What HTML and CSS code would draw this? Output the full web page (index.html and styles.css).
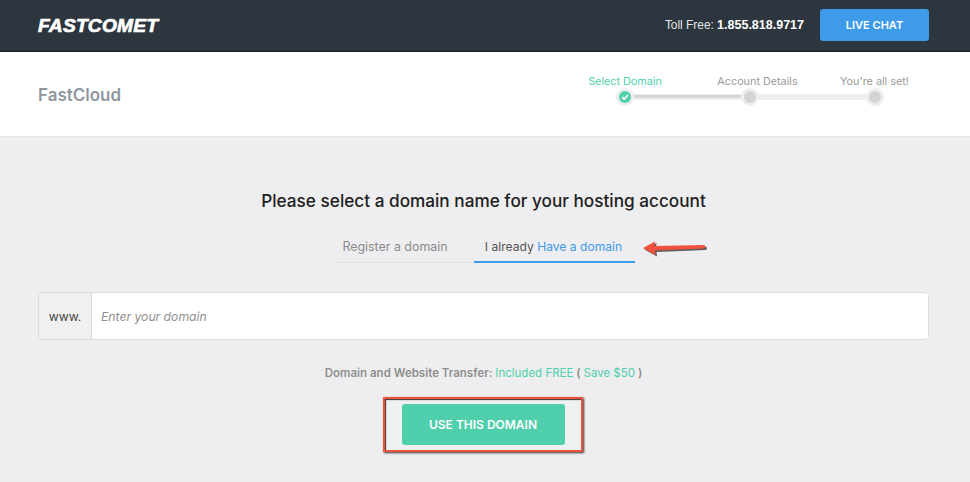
FILE: index.html
```html
<!DOCTYPE html>
<html lang="en">
<head>
  <meta charset="UTF-8" />
  <meta name="viewport" content="width=device-width, initial-scale=1.0" />
  <title>FastCloud | FastComet</title>
  <link rel="stylesheet" href="styles.css">
</head>
<body>
  <header class="ust-bar">
    <a class="logo" href="#">FASTCOMET</a>
    <div class="ust-sag">
      <p class="telefon">Toll Free: <strong>1.855.818.9717</strong></p>
      <a class="canli-destek" href="#">LIVE CHAT</a>
    </div>
  </header>

  <section class="urun-bar">
    <h2 class="urun-adi">FastCloud</h2>
    <div class="adimlar">
      <div class="adim-yazilari">
        <span class="adim-yazi aktif">Select Domain</span>
        <span class="adim-yazi">Account Details</span>
        <span class="adim-yazi">You're all set!</span>
      </div>
      <div class="adim-cizgi">
        <span class="nokta tamam">
          <svg viewBox="0 0 10 10" width="8" height="8" aria-hidden="true">
            <path d="M1.5 5.2 4 7.6 8.6 2.6" fill="none" stroke="#fff" stroke-width="2" />
          </svg>
        </span>
        <span class="nokta"></span>
        <span class="nokta"></span>
      </div>
    </div>
  </section>

  <main class="icerik">
    <h1>Please select a domain name for your hosting account</h1>

    <div class="sekmeler">
      <a class="sekme" href="#">Register a domain</a>
      <a class="sekme secili" href="#">I already <span class="mavi">Have a domain</span></a>
      <!-- kirmizi ok -->
      <svg class="ok" viewBox="0 0 70 20" width="70" height="20" aria-hidden="true">
        <path d="M3 9 L15 2.500 L14.500 7 L64 6 Q67 7.500 64 9.500 L15 11.500 L15.500 16 Z" fill="#2b2b2b" transform="translate(1.500 1.500)" opacity="0.75" />
        <path d="M3 9 L15 2.500 L14.500 7 L64 6 Q67 7.500 64 9.500 L15 11.500 L15.500 16 Z" fill="#f0523f" />
      </svg>
    </div>

    <div class="alan">
      <span class="alan-on">www.</span>
      <input class="alan-girdi" type="text" placeholder="Enter your domain" />
    </div>

    <p class="transfer">Domain and Website Transfer: <span class="yesil">Included FREE</span> ( <span class="yesil">Save $50</span> )</p>

    <div class="cerceve">
      <button class="buton">USE THIS DOMAIN</button>
    </div>
  </main>
</body>
</html>
```

FILE: styles.css
```css
* {
  margin: 0;
  padding: 0;
  box-sizing: border-box;
}

html,
body {
  height: 100%;
}

body {
  font-family: "Inter", "Liberation Sans", sans-serif;
  background: #eeeef0;
  color: #222;
  overflow: hidden;
}

a {
  text-decoration: none;
}

/* Ust koyu bar */
.ust-bar {
  height: 52px;
  background: #2d353e;
  border-bottom: 1px solid #1d232b;
  box-shadow: inset 0 -1px 0 #272e36;
  display: flex;
  align-items: center;
  justify-content: space-between;
  padding: 0 41px 0 38px;
}

.logo {
  color: #fff;
  font-family: "Liberation Sans", sans-serif;
  font-size: 19.2px;
  font-weight: 700;
  font-style: italic;
  letter-spacing: 0.2px;
  -webkit-text-stroke: 0.7px #fff;
}

.ust-sag {
  display: flex;
  align-items: center;
  gap: 16px;
  padding-bottom: 1px;
}

.telefon {
  font-family: "Liberation Sans", sans-serif;
  font-size: 11.9px;
  color: #e4e6e8;
}

.telefon strong {
  color: #fff;
  font-size: 12.5px;
}

.canli-destek {
  width: 109px;
  height: 32px;
  background: #3d9be9;
  border-radius: 3px;
  color: #fff;
  font-size: 11px;
  font-weight: 600;
  display: flex;
  align-items: center;
  justify-content: center;
}

/* Urun adi ve adimlar */
.urun-bar {
  height: 85px;
  background: #fff;
  border-bottom: 1px solid #e6e6e6;
  display: flex;
  justify-content: space-between;
  padding: 0 46px 0 38px;
}

.urun-adi {
  font-size: 17px;
  font-weight: 600;
  color: #8f979f;
  padding-top: 33px;
}

.adimlar {
  width: 364px;
  padding-top: 22px;
}

.adim-yazilari {
  display: grid;
  grid-template-columns: 130px 135px 99px;
  text-align: center;
  font-size: 10.8px;
  color: #9a9a9a;
  line-height: 16px;
}

.adim-yazi.aktif {
  color: #4fcfab;
}

.adim-cizgi {
  position: relative;
  width: 268px;
  margin: -2px 0 0 56px;
  display: flex;
  justify-content: space-between;
}

/* Cizgi noktalarin altinda */
.adim-cizgi::before {
  content: "";
  position: absolute;
  left: 8px;
  right: 8px;
  top: 6px;
  height: 6px;
  background: #eeeeee;
}

.adim-cizgi::after {
  content: "";
  position: absolute;
  left: 14px;
  width: 120px;
  top: 7px;
  height: 3px;
  background: #d6d6d8;
}

.nokta {
  position: relative;
  z-index: 1;
  width: 18px;
  height: 18px;
  border-radius: 50%;
  background: #d4d4d6;
  border: 3px solid #eeeeee;
  display: flex;
  align-items: center;
  justify-content: center;
}

.nokta.tamam {
  background: #4fcfab;
}

/* Ana icerik */
.icerik {
  padding: 0 41px 0 38px;
  display: flex;
  flex-direction: column;
  align-items: center;
}

h1 {
  font-size: 17.2px;
  font-weight: 500;
  color: #202020;
  line-height: 24px;
  margin-top: 52px;
}

.sekmeler {
  position: relative;
  display: flex;
  margin-top: 24px;
  margin-left: 1px;
}

.sekme {
  font-size: 12.4px;
  line-height: 20px;
  height: 26px;
  padding-right: 16px;
  color: #8a8a8a;
  text-align: center;
  width: 140px;
  border-bottom: 1px solid #e4e4e6;
}

.sekme.secili {
  width: 161px;
  padding-right: 2px;
  font-size: 12.1px;
  color: #555;
  border-bottom: 2px solid #3d9be9;
  margin-left: 1px;
}

.mavi {
  color: #3d9be9;
}

.ok {
  position: absolute;
  left: 307px;
  top: 2px;
}

.alan {
  display: flex;
  width: 100%;
  height: 48px;
  margin-top: 29px;
  border: 1px solid #dcdcdc;
  border-radius: 4px;
  overflow: hidden;
}

.alan-on {
  width: 53px;
  background: #f0f0f0;
  border-right: 1px solid #dcdcdc;
  font-size: 12.2px;
  color: #444;
  display: flex;
  align-items: center;
  justify-content: center;
}

.alan-girdi {
  flex: 1;
  border: none;
  outline: none;
  background: #fff;
  padding-left: 9px;
  font-family: inherit;
  font-size: 12.2px;
  font-style: italic;
}

.alan-girdi::placeholder {
  color: #8f8f8f;
  opacity: 1;
}

.transfer {
  margin-top: 25px;
  font-size: 11.5px;
  line-height: 16px;
  font-weight: 600;
  color: #8e8e8e;
}

.yesil {
  color: #4fcfab;
  font-weight: 400;
}

.cerceve {
  margin-top: 16px;
  margin-left: -1px;
  width: 200px;
  height: 55px;
  border: 2px solid #f0503e;
  box-shadow: 1px 1px 2px #333, inset 1px 1px 1px #333;
  background: #eef1f1;
  display: flex;
  align-items: center;
  justify-content: center;
}

.buton {
  width: 163px;
  height: 41px;
  border: none;
  border-radius: 3px;
  background: #4fcfab;
  color: #fff;
  font-family: inherit;
  font-size: 12px;
  font-weight: 600;
}
```
